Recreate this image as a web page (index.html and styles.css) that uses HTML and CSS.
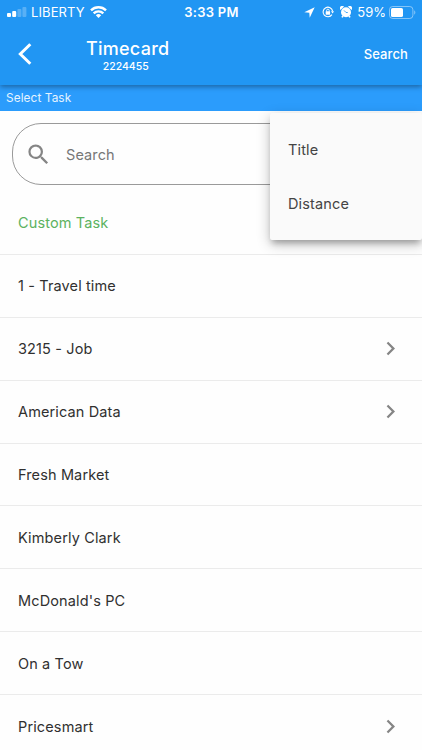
FILE: index.html
```html
<!DOCTYPE html>
<html lang="en">
<head>
    <meta charset="UTF-8">
    <meta name="viewport" content="width=device-width, initial-scale=1.0">
    <title>Timecard</title>
    <link rel="stylesheet" href="styles.css">
</head>
<body>
    <div class="screen">
    <header class="header">
        <div class="status-bar">
            <div class="status-left">
                <svg class="signal" width="20" height="10" viewBox="0 0 20 10" fill="#fff">
                    <rect x="0" y="6" width="4" height="4" rx="1"/>
                    <rect x="5.2" y="4" width="4" height="6" rx="1"/>
                    <rect x="10.4" y="2" width="4" height="8" rx="1" opacity=".25"/>
                    <rect x="15.4" y="0" width="4" height="10" rx="1" opacity=".25"/>
                </svg>
                <span class="carrier">LIBERTY</span>
                <svg class="wifi" width="17" height="12" viewBox="0 0 17 12" fill="none" stroke="#fff" stroke-width="2.4">
                    <path d="M1 4.3a10.7 10.7 0 0 1 15 0"/>
                    <path d="M3.7 7.4a6.8 6.8 0 0 1 9.6 0"/>
                    <path d="M8.5 12L5.8 9.3a3.9 3.9 0 0 1 5.4 0z" fill="#fff" stroke="none"/>
                </svg>
            </div>
            <span class="clock">3:33 PM</span>
            <div class="status-right">
                <svg width="11" height="11" viewBox="0 0 11 11" fill="#fff">
                    <path d="M10.7.3L.3 5.3l5 .4.4 5z"/>
                </svg>
                <svg class="lock" width="12" height="12" viewBox="0 0 12 12" fill="none" stroke="#fff">
                    <path d="M9.9 8.6a4.8 4.8 0 1 1 .7-3.5" stroke-width="1.1"/>
                    <path d="M9 5.2h3L10.6 7.4z" fill="#fff" stroke="none"/>
                    <rect x="3.7" y="5.2" width="4.4" height="3.5" rx=".4" fill="#fff" stroke="none"/>
                    <path d="M4.6 5.6V4.5a1.3 1.3 0 0 1 2.6 0v1.1" stroke-width=".9"/>
                </svg>
                <svg class="alarm" width="12" height="12" viewBox="0 0 12 12" fill="#fff">
                    <circle cx="6" cy="6.3" r="5"/>
                    <path d="M.5 4A2.2 2.2 0 0 1 4 .6zM11.5 4A2.2 2.2 0 0 0 8 .6zM2.3 9.4l1.4 1-1 1.4-1.4-.8zM9.7 9.4l-1.4 1 1 1.4 1.4-.8z"/>
                    <path d="M4 4.4L6 6.5h1.8" fill="none" stroke="#2196f3" stroke-width=".8"/>
                </svg>
                <span class="percent">59%</span>
                <svg class="battery" width="27" height="13" viewBox="0 0 27 13">
                    <rect x=".5" y=".5" width="23.4" height="12" rx="3.2" fill="none" stroke="#fff" stroke-opacity=".45"/>
                    <rect x="2" y="2" width="12" height="9" rx="1.6" fill="#fff"/>
                    <path d="M25.2 4.3v4.4c1.6-.7 1.6-3.7 0-4.4z" fill="#fff" opacity=".45"/>
                </svg>
            </div>
        </div>
        <div class="app-bar">
            <svg class="back" width="14" height="22" viewBox="0 0 14 22" fill="none" stroke="#fff" stroke-width="3">
                <path d="M12.3 1.2L2.3 11l10 9.8"/>
            </svg>
            <div class="titles">
                <h1 class="title">Timecard</h1>
                <div class="subtitle">2224455</div>
            </div>
            <span class="search-action">Search</span>
        </div>
    </header>
    <div class="section-bar">Select Task</div>
    <main>
        <div class="search-box">
            <svg width="27" height="27" viewBox="0 0 24 24" fill="#858585">
                <path d="M15.5 14h-.79l-.28-.27A6.471 6.471 0 0 0 16 9.5 6.5 6.5 0 1 0 9.5 16c1.61 0 3.09-.59 4.23-1.57l.27.28v.79l5 4.99L20.49 19l-4.99-5zm-6 0C7.01 14 5 11.99 5 9.5S7.01 5 9.5 5 14 7.01 14 9.5 11.99 14 9.5 14z"/>
            </svg>
            <span>Search</span>
        </div>
        <ul class="task-list">
            <li class="task custom">Custom Task</li>
            <li class="task">1 - Travel time</li>
            <li class="task">3215 - Job
                <svg width="27" height="27" viewBox="0 0 24 24" fill="#858585"><path d="M10 6L8.59 7.41 13.17 12l-4.58 4.59L10 18l6-6z"/></svg>
            </li>
            <li class="task">American Data
                <svg width="27" height="27" viewBox="0 0 24 24" fill="#858585"><path d="M10 6L8.59 7.41 13.17 12l-4.58 4.59L10 18l6-6z"/></svg>
            </li>
            <li class="task">Fresh Market</li>
            <li class="task">Kimberly Clark</li>
            <li class="task">McDonald's PC</li>
            <li class="task">On a Tow</li>
            <li class="task">Pricesmart
                <svg width="27" height="27" viewBox="0 0 24 24" fill="#858585"><path d="M10 6L8.59 7.41 13.17 12l-4.58 4.59L10 18l6-6z"/></svg>
            </li>
        </ul>
    </main>
    <div class="menu">
        <div class="menu-item">Title</div>
        <div class="menu-item">Distance</div>
    </div>
    </div>
</body>
</html>
```
FILE: styles.css
```css
* {
    box-sizing: border-box;
}
body {
    margin: 0;
    background-color: #fefefe;
    color: #303030;
    font-family: Inter, "Liberation Sans", sans-serif;
    font-size: 14.5px;
}
.screen {
    position: relative;
    height: 750px;
    overflow: hidden;
}
.header {
    position: relative;
    z-index: 1;
    height: 85px;
    background-color: #2196f3;
    color: #fff;
    box-shadow: 0 2px 5px rgba(0, 0, 0, 0.35);
}
.status-bar {
    display: grid;
    grid-template-columns: 1fr auto 1fr;
    align-items: center;
    height: 24px;
    padding: 0 6px 0 7px;
}
.status-left,
.status-right {
    display: flex;
    align-items: center;
}
.status-right {
    justify-content: flex-end;
}
.carrier {
    margin-left: 4px;
    font-size: 13px;
    letter-spacing: 0.1px;
}
.wifi {
    margin-left: 5px;
}
.clock {
    font-size: 13px;
    font-weight: 600;
    letter-spacing: 0.25px;
}
.lock {
    margin-left: 7px;
}
.alarm {
    margin-left: 6px;
}
.percent {
    margin-left: 5px;
    font-size: 13px;
}
.battery {
    margin-left: 3px;
}
.app-bar {
    display: flex;
    align-items: center;
    height: 61px;
    padding: 0 14px 0 18px;
}
.back {
    margin-bottom: 1px;
}
.titles {
    margin-left: 54px;
    text-align: center;
}
.title {
    margin: 0;
    padding-top: 1px;
    font-size: 18px;
    font-weight: 500;
    line-height: 22px;
    letter-spacing: 0.25px;
}
.subtitle {
    margin-right: 4px;
    font-size: 10.5px;
    font-weight: 500;
    line-height: 13px;
    letter-spacing: 0;
}
.search-action {
    margin-left: auto;
    margin-bottom: 1px;
    font-size: 13px;
    font-weight: 500;
    letter-spacing: 0.1px;
}
.section-bar {
    height: 26px;
    padding: 0 6px;
    background-color: #2b9cfc;
    color: #e4f3ff;
    font-size: 11.8px;
    line-height: 27px;
    letter-spacing: 0.1px;
}
.search-box {
    display: flex;
    align-items: center;
    gap: 14px;
    height: 62px;
    margin: 12px 12px 7px;
    padding-left: 12px;
    border: 1px solid #9a9a9a;
    border-radius: 29px;
    color: #777;
    letter-spacing: 0.1px;
}
.task-list {
    margin: 0;
    padding: 0;
    list-style: none;
}
.task {
    display: flex;
    align-items: center;
    justify-content: space-between;
    height: 62.9px;
    padding: 0 18px;
    border-bottom: 1px solid #ebebeb;
    letter-spacing: 0.13px;
}
.custom {
    color: #5cb260;
}
/* sort menu, open over the list */
.menu {
    position: absolute;
    top: 113px;
    right: 0;
    width: 152px;
    height: 127px;
    padding: 10px 18px;
    border-radius: 2px;
    background-color: #fafafa;
    box-shadow: 0 5px 6px -2px rgba(0, 0, 0, 0.25), 0 4px 14px rgba(0, 0, 0, 0.24);
}
.menu-item {
    height: 54px;
    line-height: 54px;
    color: #444;
    letter-spacing: 0.15px;
}
```
